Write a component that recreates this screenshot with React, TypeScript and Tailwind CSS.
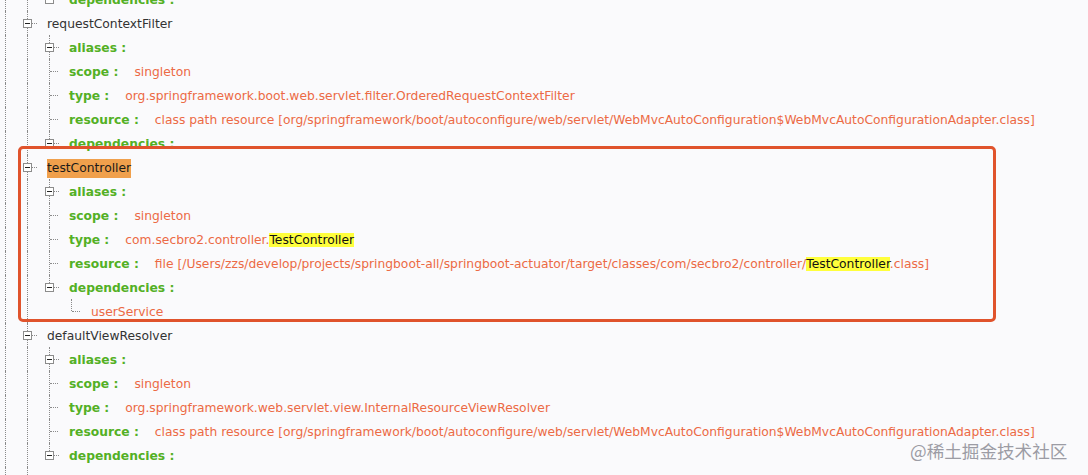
import React from "react";

type Row = {
  cells: string;
  kind: "bean" | "prop" | "leaf";
  name?: string;
  label?: string;
  value?: React.ReactNode;
  hl?: boolean;
};

const FONT = { fontFamily: '"DejaVu Sans", Verdana, sans-serif' };

function Cell({ c }: { c: string }) {
  const vline = "absolute left-[11px] w-0 border-l border-dotted border-[#8a8a8a]";
  const hline = "absolute top-[12px] h-0 border-t border-dotted border-[#8a8a8a]";
  return (
    <div className="relative w-[22px] h-[24px] shrink-0">
      {(c === "I" || c === "T" || c === "b") && <div className={`${vline} top-0 bottom-0`} />}
      {(c === "L" || c === "u") && <div className={`${vline} top-0 h-[12px]`} />}
      {(c === "T" || c === "L") && <div className={`${hline} left-[12px] w-[8px]`} />}
      {(c === "b" || c === "u") && (
        <>
          <div className={`${hline} left-[16px] w-[5px]`} />
          <div className="absolute left-[7px] top-[8px] w-[9px] h-[9px] border border-[#8c8c8c] bg-white flex items-center justify-center">
            <div className="w-[5px] h-px bg-[#222]" />
          </div>
        </>
      )}
    </div>
  );
}

const props = (type: React.ReactNode, resource: React.ReactNode, deps: string, first = "IIb"): Row[] => [
  { cells: first, kind: "prop", label: "aliases :" },
  { cells: "IIT", kind: "prop", label: "scope :", value: "singleton" },
  { cells: "IIT", kind: "prop", label: "type :", value: type },
  { cells: "IIT", kind: "prop", label: "resource :", value: resource },
  { cells: deps, kind: "prop", label: "dependencies :" },
];

const Y = ({ children }: { children: React.ReactNode }) => (
  <span className="bg-[#ffff3c] text-[#111]">{children}</span>
);

const mvc =
  "class path resource [org/springframework/boot/autoconfigure/web/servlet/WebMvcAutoConfiguration$WebMvcAutoConfigurationAdapter.class]";

const before: Row[] = [
  { cells: "IIu", kind: "prop", label: "dependencies :" },
  { cells: "Ib", kind: "bean", name: "requestContextFilter" },
  ...props("org.springframework.boot.web.servlet.filter.OrderedRequestContextFilter", mvc, "IIu"),
];

const boxed: Row[] = [
  { cells: "Ib", kind: "bean", name: "testController", hl: true },
  ...props(
    <>
      com.secbro2.controller.<Y>TestController</Y>
    </>,
    <>
      file [/Users/zzs/develop/projects/springboot-all/springboot-actuator/target/classes/com/secbro2/controller/
      <Y>TestController</Y>.class]
    </>,
    "IIu"
  ),
  { cells: "II L", kind: "leaf", name: "userService" },
];

const after: Row[] = [
  { cells: "Ib", kind: "bean", name: "defaultViewResolver" },
  ...props("org.springframework.web.servlet.view.InternalResourceViewResolver", mvc, "IIu"),
  { cells: "Ib", kind: "bean", name: "routerFunctionMapping" },
];

function TreeRow({ r }: { r: Row }) {
  return (
    <div className="flex h-[24px] items-center whitespace-nowrap">
      {r.cells.split("").map((c, i) => (
        <Cell key={i} c={c} />
      ))}
      <div className="ml-[9px] flex items-center pt-[2px] text-[12.3px] leading-[22px]">
        {r.kind === "bean" && (
          <span className={r.hl ? "bg-[#f0a04c] text-[#1a1a1a] leading-[19px]" : "text-[#333]"}>{r.name}</span>
        )}
        {r.kind === "leaf" && <span className="text-[#ec6a45]">{r.name}</span>}
        {r.kind === "prop" && (
          <>
            <span className="font-bold text-[#53b025]">{r.label}</span>
            {r.value && <span className="ml-4 text-[#ec6a45]">{r.value}</span>}
          </>
        )}
      </div>
    </div>
  );
}

export default function App() {
  return (
    <div className="relative h-[475px] w-[1088px] overflow-hidden bg-[#fafafc]" style={FONT}>
      <div className="ml-[-6px] mt-[-13px]">
        {before.map((r, i) => (
          <TreeRow key={"a" + i} r={r} />
        ))}
        <div className="relative">
          {boxed.map((r, i) => (
            <TreeRow key={"b" + i} r={r} />
          ))}
          <div className="pointer-events-none absolute left-[24px] top-[-9px] h-[176px] w-[978px] rounded-[5px] border-[3px] border-[#e0532c]" />
        </div>
        {after.map((r, i) => (
          <TreeRow key={"c" + i} r={r} />
        ))}
      </div>
      <div
        className="absolute left-[910px] top-[439px] text-[17.6px] leading-[24px] text-[#9c9ca4]"
        style={{ fontFamily: '"Noto Sans CJK SC", "Noto Sans", sans-serif' }}
      >
        @稀土掘金技术社区
      </div>
    </div>
  );
}
